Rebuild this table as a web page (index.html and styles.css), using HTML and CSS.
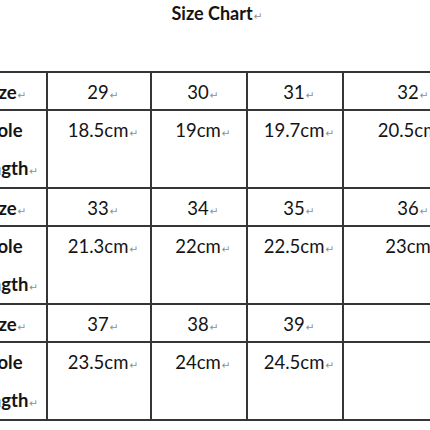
FILE: index.html
```html
<!DOCTYPE html>
<html>
<head>
<meta charset="utf-8">
<link rel="stylesheet" href="styles.css">
</head>
<body>
<div class="page">
  <h1 class="title">Size Chart<span class="pm">↵</span></h1>
  <div class="frame">
    <table class="chart">
      <colgroup><col class="c0"><col class="c1"><col class="c2"><col class="c3"><col class="c4"></colgroup>
      <tr class="size"><th>Size<span class="pm">↵</span></th><td>29<span class="pm">↵</span></td><td>30<span class="pm">↵</span></td><td>31<span class="pm">↵</span></td><td>32<span class="pm">↵</span></td></tr>
      <tr class="sole"><th><div class="ln">Sole</div><div class="ln ln2">Length<span class="pm">↵</span></div></th><td>18.5cm<span class="pm">↵</span></td><td>19cm<span class="pm">↵</span></td><td>19.7cm<span class="pm">↵</span></td><td>20.5cm<span class="pm">↵</span></td></tr>
      <tr class="size"><th>Size<span class="pm">↵</span></th><td>33<span class="pm">↵</span></td><td>34<span class="pm">↵</span></td><td>35<span class="pm">↵</span></td><td>36<span class="pm">↵</span></td></tr>
      <tr class="sole"><th><div class="ln">Sole</div><div class="ln ln2">Length<span class="pm">↵</span></div></th><td>21.3cm<span class="pm">↵</span></td><td>22cm<span class="pm">↵</span></td><td>22.5cm<span class="pm">↵</span></td><td>23cm<span class="pm">↵</span></td></tr>
      <tr class="size"><th>Size<span class="pm">↵</span></th><td>37<span class="pm">↵</span></td><td>38<span class="pm">↵</span></td><td>39<span class="pm">↵</span></td><td></td></tr>
      <tr class="sole"><th><div class="ln">Sole</div><div class="ln ln2">Length<span class="pm">↵</span></div></th><td>23.5cm<span class="pm">↵</span></td><td>24cm<span class="pm">↵</span></td><td>24.5cm<span class="pm">↵</span></td><td></td></tr>
    </table>
  </div>
</div>
</body>
</html>
```
FILE: styles.css
```css
html, body {
  margin: 0;
  padding: 0;
  background: #ffffff;
}
body {
  font-family: Lato, "Liberation Sans", sans-serif;
  color: #141414;
}
.page {
  width: 430px;
  height: 430px;
  overflow: hidden;
}
.title {
  margin: 2px 0 0;
  font-size: 18px;
  font-weight: 700;
  line-height: 22px;
  text-align: center;
  padding-left: 4px;
}
.frame {
  margin-top: 47px;
}
.chart {
  border-collapse: collapse;
  table-layout: fixed;
  width: 520px;
  margin-left: -46px;
}
.c0 { width: 92px; }
.c1 { width: 104px; }
.c2 { width: 96px; }
.c3 { width: 96px; }
.c4 { width: 132px; }
.chart th,
.chart td {
  border: 2px solid #353535;
  padding: 2px 0 0 8px;
  text-align: center;
  vertical-align: top;
  font-size: 18.5px;
  line-height: 34px;
  white-space: nowrap;
}
.chart th {
  font-weight: 700;
}
.chart td {
  font-weight: 400;
}
.size th,
.size td {
  padding-bottom: 0;
}
.sole td {
  padding-bottom: 40px;
}
.sole th {
  padding-bottom: 2px;
}
.ln {
  height: 34px;
}
.ln2 {
  margin-top: 4px;
}
.pm {
  font-family: "DejaVu Sans", sans-serif;
  font-size: 10.5px;
  line-height: 10px;
  font-weight: 400;
  color: #8f8f8f;
  margin-left: 1px;
}
```
